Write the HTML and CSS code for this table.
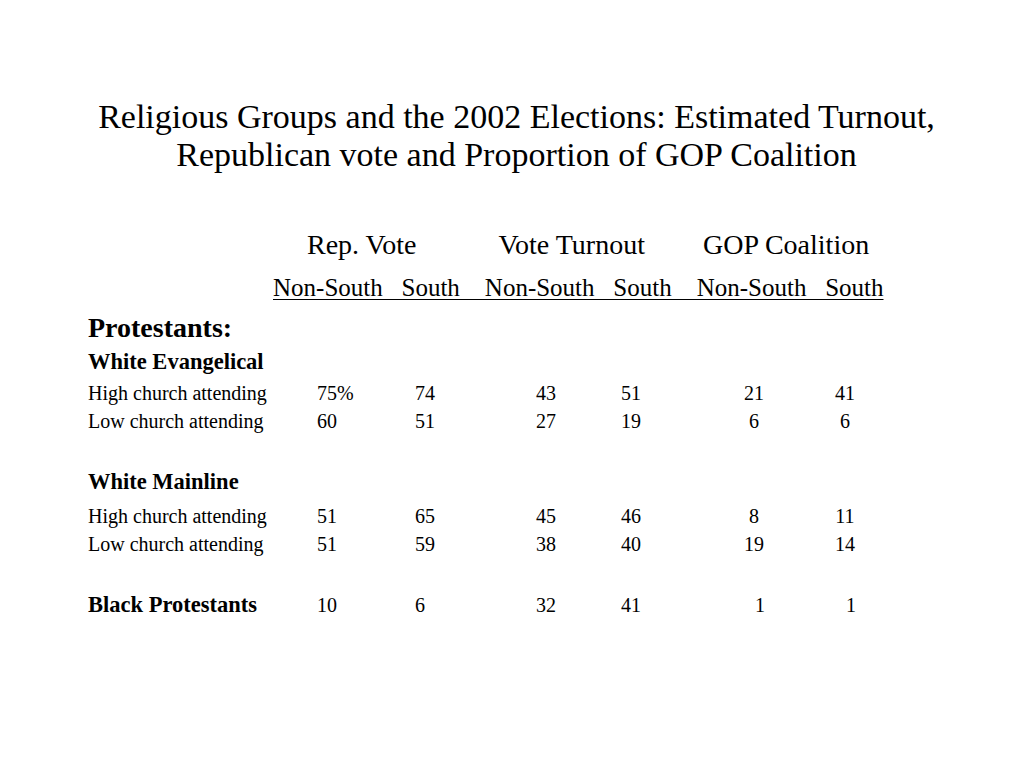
FILE: index.html
```html
<!DOCTYPE html>
<html lang="en">
<head>
<meta charset="utf-8">
<title>Religious Groups and the 2002 Elections</title>
<link rel="stylesheet" href="styles.css">
</head>
<body>
<div class="slide">
  <h1 class="title">Religious Groups and the 2002 Elections: Estimated Turnout,<br>Republican vote and Proportion of GOP Coalition</h1>

  <div class="heads">
    <span class="h-rep">Rep. Vote</span>
    <span class="h-turn">Vote Turnout</span>
    <span class="h-gop">GOP Coalition</span>
  </div>
  <div class="subheads"><span class="ul">Non-South   South    Non-South   South    Non-South   South</span></div>

  <div class="group">Protestants:</div>

  <div class="sub sub-we">White Evangelical</div>
  <div class="row row-first">
    <span class="lab">High church attending</span>
    <span class="c1">75%</span><span class="c2">74</span><span class="c3">43</span><span class="c4">51</span><span class="c5">21</span><span class="c6">41</span>
  </div>
  <div class="row">
    <span class="lab">Low church attending</span>
    <span class="c1">60</span><span class="c2">51</span><span class="c3">27</span><span class="c4">19</span><span class="c5">6</span><span class="c6">6</span>
  </div>

  <div class="sub sub-wm">White Mainline</div>
  <div class="row row-wm">
    <span class="lab">High church attending</span>
    <span class="c1">51</span><span class="c2">65</span><span class="c3">45</span><span class="c4">46</span><span class="c5">8</span><span class="c6">11</span>
  </div>
  <div class="row">
    <span class="lab">Low church attending</span>
    <span class="c1">51</span><span class="c2">59</span><span class="c3">38</span><span class="c4">40</span><span class="c5">19</span><span class="c6">14</span>
  </div>

  <div class="row row-black">
    <span class="lab lab-bold">Black Protestants</span>
    <span class="c1">10</span><span class="c2">6</span><span class="c3">32</span><span class="c4">41</span><span class="c5 nudge-r">1</span><span class="c6 nudge-r">1</span>
  </div>
</div>
</body>
</html>
```

FILE: styles.css
```css
html, body {
  margin: 0;
  padding: 0;
  background: #ffffff;
}

body {
  font-family: "Liberation Serif", "Times New Roman", serif;
  color: #000000;
}

.slide {
  width: 1024px;
  height: 768px;
  box-sizing: border-box;
  padding-top: 98px;
  overflow: hidden;
}

.title {
  margin: 0;
  padding-left: 9px;
  font-size: 34px;
  font-weight: normal;
  line-height: 38px;
  text-align: center;
}

.heads {
  display: flex;
  margin-top: 54px;
  padding-left: 307px;
  font-size: 28px;
  line-height: 34px;
  white-space: nowrap;
}

.h-turn {
  margin-left: 82px;
}

.h-gop {
  margin-left: 58px;
}

.subheads {
  margin-top: 9px;
  padding-left: 273px;
  font-size: 25px;
  line-height: 34px;
  white-space: pre;
}

.ul {
  text-decoration: underline;
  text-decoration-thickness: 1px;
  text-underline-offset: 3px;
}

.group {
  margin-top: 6px;
  padding-left: 88px;
  font-size: 28px;
  font-weight: bold;
  line-height: 34px;
}

.sub {
  padding-left: 88px;
  font-size: 22.5px;
  font-weight: bold;
  line-height: 30px;
}

.sub-we {
  margin-top: 2px;
}

.sub-wm {
  margin-top: 32px;
}

.row {
  display: grid;
  grid-template-columns: 229px 98px 121px 85px 113px 91px 40px;
  align-items: baseline;
  padding-left: 88px;
  font-size: 20px;
  line-height: 28px;
  white-space: nowrap;
}

.row-first {
  margin-top: 2px;
}

.row-wm {
  margin-top: 5px;
}

.row-black {
  margin-top: 32px;
  line-height: 30px;
}

.lab-bold {
  font-size: 22.5px;
  font-weight: bold;
}

.c5, .c6 {
  width: 40px;
  text-align: center;
}

.nudge-r {
  padding-left: 12px;
  box-sizing: border-box;
}
```
